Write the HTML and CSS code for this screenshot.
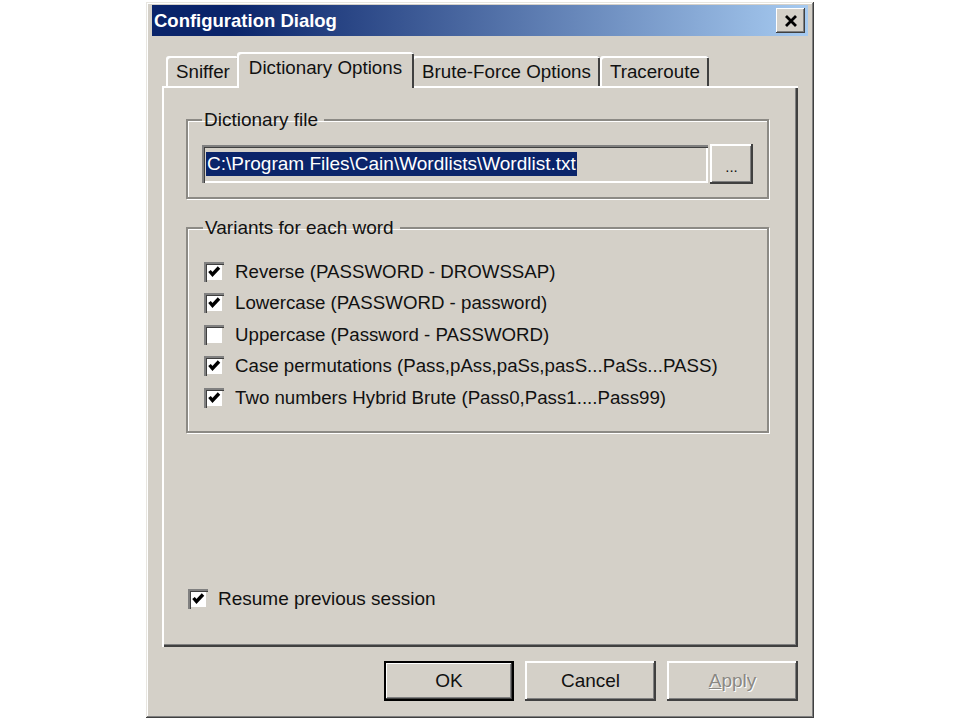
FILE: index.html
```html
<!DOCTYPE html>
<html lang="en">
<head>
    <meta charset="UTF-8">
    <title>Configuration Dialog</title>
    <link rel="stylesheet" href="styles.css">
</head>
<body>
    <div class="window">
        <div class="titlebar">
            <span class="title">Configuration Dialog</span>
            <button class="close" title="Close">
                <svg width="14" height="12" viewBox="0 0 14 12">
                    <path d="M2 1 L12 11 M12 1 L2 11" stroke="#000" stroke-width="2.8" fill="none"/>
                </svg>
            </button>
        </div>

        <div class="content">
            <div class="tabs">
                <div class="tab">Sniffer</div>
                <div class="tab active">Dictionary Options</div>
                <div class="tab">Brute-Force Options</div>
                <div class="tab">Traceroute</div>
            </div>

            <div class="panel">
                <fieldset class="group group-file">
                    <legend>Dictionary file</legend>
                    <div class="file-row">
                        <div class="field"><span class="selected">C:\Program Files\Cain\Wordlists\Wordlist.txt</span></div>
                        <button class="btn browse">...</button>
                    </div>
                </fieldset>

                <fieldset class="group group-variants">
                    <legend>Variants for each word</legend>
                    <div class="check-list">
                        <label class="check"><span class="box checked"></span>Reverse (PASSWORD - DROWSSAP)</label>
                        <label class="check"><span class="box checked"></span>Lowercase (PASSWORD - password)</label>
                        <label class="check"><span class="box"></span>Uppercase (Password - PASSWORD)</label>
                        <label class="check"><span class="box checked"></span>Case permutations (Pass,pAss,paSs,pasS...PaSs...PASS)</label>
                        <label class="check"><span class="box checked"></span>Two numbers Hybrid Brute (Pass0,Pass1....Pass99)</label>
                    </div>
                </fieldset>

                <label class="check resume"><span class="box checked"></span>Resume previous session</label>
            </div>

            <div class="buttons">
                <button class="btn default">OK</button>
                <button class="btn">Cancel</button>
                <button class="btn disabled"><u>A</u>pply</button>
            </div>
        </div>
    </div>
</body>
</html>
```

FILE: styles.css
```css
/* Classic Windows dialog, scaled up */
* {
    margin: 0;
    padding: 0;
    box-sizing: border-box;
}

body {
    background: #fff;
    font-family: 'Liberation Sans', Arial, sans-serif;
    font-size: 19px;
    color: #111;
}

.window {
    margin: 2px 0 0 146px;
    width: 668px;
    height: 716px;
    padding: 3px 6px;
    background: #d4d0c8;
    display: flex;
    flex-direction: column;
    box-shadow: inset -1px -1px 0 #404040, inset 1px 1px 0 #e8e6e0,
                inset -2px -2px 0 #808080, inset 2px 2px 0 #fff;
}

.titlebar {
    height: 31px;
    display: flex;
    align-items: center;
    justify-content: space-between;
    padding: 0 3px 0 2px;
    background: linear-gradient(to right, #0a246a 0%, #0a246a 12%, #a6caf0 100%);
}

    .titlebar .title {
        color: #fff;
        font-weight: bold;
        font-size: 18.5px;
    }

.close {
    width: 29px;
    height: 25px;
    display: flex;
    align-items: center;
    justify-content: center;
    background: #d4d0c8;
    border: none;
    box-shadow: inset -1px -1px 0 #404040, inset 1px 1px 0 #fff,
                inset -2px -2px 0 #808080;
}

.content {
    flex: 1;
    display: flex;
    flex-direction: column;
    padding: 16px 10px 14px 10px;
}

/* Tabs */
.tabs {
    display: flex;
    align-items: flex-end;
    height: 34px;
    padding-left: 4px;
    font-size: 18.75px;
}

.tab {
    height: 30px;
    padding: 2px 9px 0 10px;
    display: flex;
    align-items: center;
    border-radius: 3px 3px 0 0;
    box-shadow: inset 2px 2px 0 #fff, inset -2px 0 0 #404040;
}

    .tab.active {
        height: 36px;
        margin: 0 -2px -2px -2px;
        padding: 0 12px 4px 12px;
        background: #d4d0c8;
        position: relative;
        z-index: 1;
    }

.panel {
    flex: 1;
    display: flex;
    flex-direction: column;
    padding: 23px 29px 32px 24px;
    box-shadow: inset 2px 2px 0 #fff, inset -2px -2px 0 #404040,
                inset -3px -3px 0 #808080;
}

/* Group boxes */
.group {
    border: 2px solid #8c8a85;
    box-shadow: inset 1px 1px 0 #fff, 1px 1px 0 #fff;
    padding: 0 14px 13px 14px;
    min-width: 0;
}

    .group legend {
        padding: 0 6px 0 2px;
        line-height: 22px;
    }

.group-file {
    padding-top: 13px;
}

.file-row {
    display: flex;
    align-items: center;
    gap: 2px;
}

.field {
    flex: 1;
    height: 38px;
    padding: 4px 4px;
    display: flex;
    align-items: center;
    box-shadow: inset 2px 2px 0 #808080, inset 3px 3px 0 #404040,
                inset -2px -2px 0 #fff;
}

    .field .selected {
        background: #0a246a;
        color: #fff;
        padding: 1px 1px 1px 1px;
        line-height: 22px;
    }

.btn {
    font-family: inherit;
    font-size: 19px;
    color: #111;
    background: #d4d0c8;
    border: none;
    height: 40px;
    box-shadow: inset -2px -2px 0 #404040, inset 2px 2px 0 #fff,
                inset -3px -3px 0 #808080;
}

.browse {
    width: 43px;
    font-size: 15px;
    padding-top: 4px;
}

.group-variants {
    margin-top: 18px;
    padding: 17px 14px 17px 15px;
}

.check-list {
    display: flex;
    flex-direction: column;
    font-size: 18.7px;
}

.check {
    display: flex;
    align-items: center;
    height: 31.5px;
    gap: 11px;
}

.box {
    width: 20px;
    height: 20px;
    background: #fff;
    box-shadow: inset 2px 2px 0 #808080, inset 3px 3px 0 #404040,
                inset -2px -2px 0 #d4d0c8;
}

    .box.checked {
        background: #fff url("data:image/svg+xml,%3Csvg xmlns='http://www.w3.org/2000/svg' width='20' height='20' viewBox='0 0 20 20'%3E%3Cpath d='M5.5 9 L8.5 12.5 L15 5.5' stroke='%23000' stroke-width='3.4' fill='none'/%3E%3C/svg%3E") no-repeat center;
    }

.group-variants .box {
    margin-left: 1px;
}

.resume {
    margin-top: auto;
    margin-left: 2px;
    gap: 10px;
}

/* Bottom buttons */
.buttons {
    display: flex;
    justify-content: flex-end;
    gap: 11px;
    margin-top: 14px;
}

    .buttons .btn {
        width: 131px;
    }

.btn.default {
    width: 130px;
    box-shadow: inset 0 0 0 2px #000, inset -3px -3px 0 #404040,
                inset 3px 3px 0 #fff, inset -4px -4px 0 #808080;
}

.btn.disabled {
    color: #8a8883;
    text-shadow: 1px 1px 0 #fff;
}
```
